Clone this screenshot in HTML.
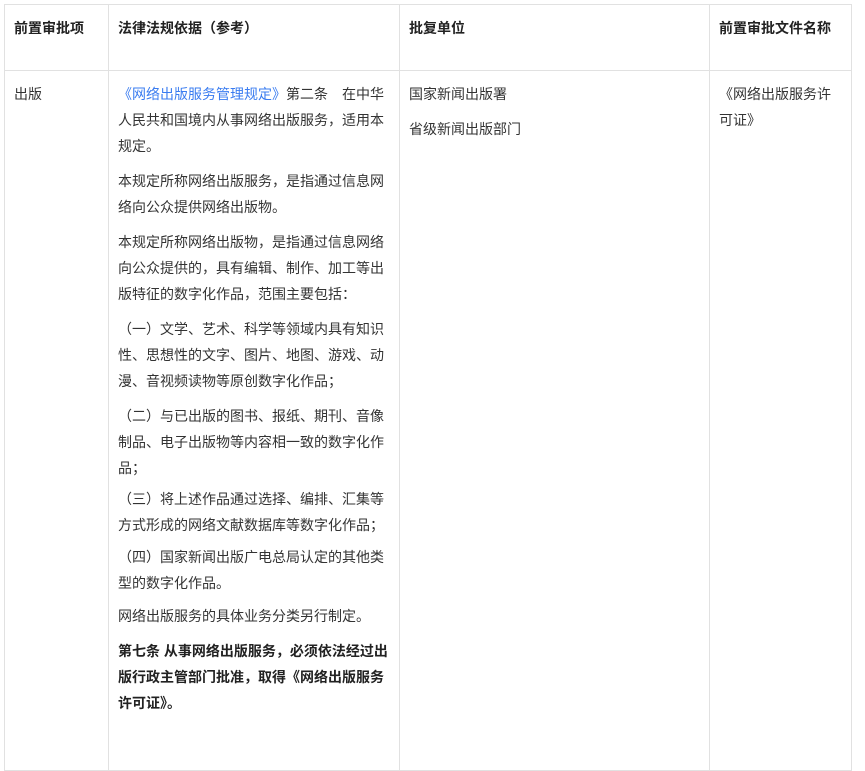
<!DOCTYPE html>
<html><head><meta charset="utf-8"><style>
body{margin:0;background:#fff;font-family:"Liberation Sans","Noto Sans CJK SC",sans-serif;font-size:14px;color:#333;overflow:hidden;width:865px;height:741px}
table{position:absolute;left:4px;top:4px;border-collapse:collapse;table-layout:fixed}
td{border:1px solid #e1e1e1;vertical-align:top;padding:10px 9px;line-height:26px;white-space:nowrap}
th{border:1px solid #e1e1e1;vertical-align:top;padding:10px 9px;line-height:26px;height:45px;text-align:left;font-weight:bold;color:#222}
p{margin:0 0 9px 0}
a{color:#3a7cf0;text-decoration:none}
b{color:#222}
</style></head><body>
<table>
<colgroup><col style="width:104px"><col style="width:291px"><col style="width:310px"><col style="width:142px"></colgroup>
<tr><th>前置审批项</th><th>法律法规依据（参考）</th><th>批复单位</th><th>前置审批文件名称</th></tr>
<tr style="height:700px">
<td>出版</td>
<td>
<p><a>《网络出版服务管理规定》</a>第二条　在中华<br>人民共和国境内从事网络出版服务，适用本<br>规定。</p>
<p>本规定所称网络出版服务，是指通过信息网<br>络向公众提供网络出版物。</p>
<p>本规定所称网络出版物，是指通过信息网络<br>向公众提供的，具有编辑、制作、加工等出<br>版特征的数字化作品，范围主要包括：</p>
<p>（一）文学、艺术、科学等领域内具有知识<br>性、思想性的文字、图片、地图、游戏、动<br>漫、音视频读物等原创数字化作品；</p>
<p style="margin-bottom:5px">（二）与已出版的图书、报纸、期刊、音像<br>制品、电子出版物等内容相一致的数字化作<br>品；</p>
<p style="margin-bottom:6px">（三）将上述作品通过选择、编排、汇集等<br>方式形成的网络文献数据库等数字化作品；</p>
<p style="margin-bottom:7px">（四）国家新闻出版广电总局认定的其他类<br>型的数字化作品。</p>
<p>网络出版服务的具体业务分类另行制定。</p>
<p><b>第七条 从事网络出版服务，必须依法经过出<br>版行政主管部门批准，取得《网络出版服务<br>许可证》。</b></p>
</td>
<td><p>国家新闻出版署</p><p>省级新闻出版部门</p></td>
<td>《网络出版服务许<br>可证》</td>
</tr>
</table>
</body></html>
